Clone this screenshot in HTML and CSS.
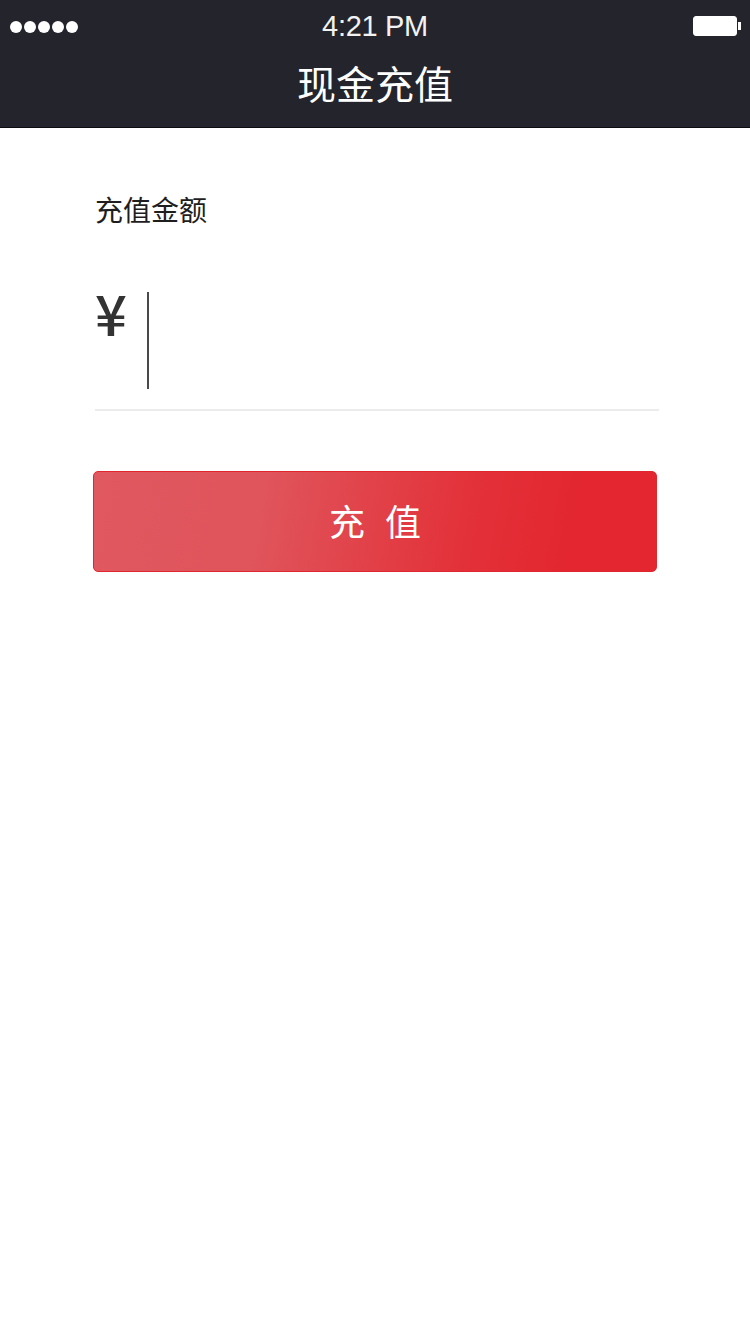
FILE: index.html
```html
<!DOCTYPE html>
<html lang="zh-CN">
<head>
<meta charset="utf-8">
<title>现金充值</title>
<link rel="stylesheet" href="styles.css">
</head>
<body>
<header class="topbar">
  <div class="status">
    <div class="signal"><span></span><span></span><span></span><span></span><span></span></div>
    <div class="time">4:21 PM</div>
    <div class="battery"><div class="battery-body"></div><div class="battery-nub"></div></div>
  </div>
  <h1 class="title">现金充值</h1>
</header>
<main class="content">
  <div class="label">充值金额</div>
  <div class="amount-row">
    <span class="currency">¥</span>
    <span class="cursor"></span>
  </div>
  <div class="divider"></div>
  <button class="submit">充 值</button>
</main>
</body>
</html>
```
FILE: styles.css
```css
* { box-sizing: border-box; }
html, body { margin: 0; padding: 0; background: #ffffff; }
body {
  width: 750px;
  min-height: 1334px;
  font-family: "Liberation Sans", "Noto Sans CJK SC", sans-serif;
}
.topbar {
  background: #23242c;
  height: 128px;
  border-bottom: 1px solid #0d0d10;
  display: flex;
  flex-direction: column;
}
.status {
  height: 52px;
  display: flex;
  align-items: center;
  justify-content: space-between;
  padding: 0 9px 0 10px;
  position: relative;
}
.signal { display: flex; gap: 2px; padding-top: 1px; }
.signal span {
  width: 12px; height: 12px; border-radius: 50%; background: #fff; display: block;
}
.time {
  position: absolute;
  left: 0; right: 0;
  text-align: center;
  color: #f2f2f2;
  font-family: "Liberation Sans", sans-serif;
  font-size: 29px;
  line-height: 52px;
  top: 0;
  letter-spacing: -0.3px;
}
.battery { display: flex; align-items: center; }
.battery-body {
  width: 44px; height: 20px; background: #fff; border-radius: 3px;
  border: 1px solid #fff;
}
.battery-nub { width: 3px; height: 8px; background: #fff; margin-left: 1px; }
.title {
  margin: 0;
  text-align: center;
  color: #ffffff;
  font-family: "Noto Sans CJK SC", sans-serif;
  font-weight: 400;
  font-size: 39px;
  line-height: 60px;
  letter-spacing: 0;
}
.content {
  padding: 63px 93px 0 93px;
}
.label {
  margin-left: 2px;
  color: #1e1e1e;
  font-family: "Noto Sans CJK SC", sans-serif;
  font-size: 28px;
  line-height: 36px;
}
.amount-row {
  display: flex;
  align-items: flex-start;
  margin-top: 65px;
  margin-left: 2px;
  height: 102px;
}
.currency {
  font-family: "Noto Sans CJK SC", sans-serif;
  font-weight: 500;
  font-size: 56px;
  line-height: 56px;
  color: #333;
  margin-top: -8px;
  width: 52px;
}
.cursor {
  width: 2px;
  height: 97px;
  background: #4a4a4a;
}
.divider {
  margin-left: 2px;
  width: 564px;
  height: 2px;
  background: #ececec;
  margin-top: 15px;
}
.submit {
  display: block;
  margin-top: 60px;
  width: 564px;
  height: 101px;
  border: 1px solid #e0262e;
  border-radius: 5px;
  background: linear-gradient(100deg, #e05860 0%, #e0545b 30%, #e3323a 65%, #e3262f 85%, #e3262f 100%);
  color: #ffffff;
  font-family: "Noto Sans CJK SC", sans-serif;
  font-size: 36px;
  line-height: 44px;
  letter-spacing: 6px;
  padding: 0 0 4px 6px;
  cursor: pointer;
}
```
